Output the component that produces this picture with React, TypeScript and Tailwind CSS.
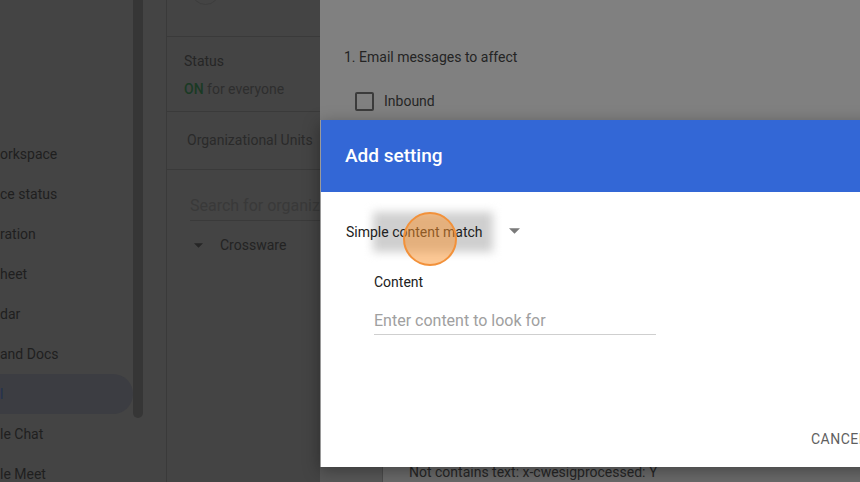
import React from 'react';

const navItems = [
  { label: 'orkspace' },
  { label: 'ce status' },
  { label: 'ration' },
  { label: 'heet' },
  { label: 'dar' },
  { label: 'and Docs' },
  { label: 'l', active: true },
  { label: 'le Chat' },
  { label: 'le Meet' },
];

const Sidebar: React.FC = () => (
  <div className="flex w-[166px] shrink-0">
    <nav className="flex w-[133px] flex-col pt-[134px]">
      {navItems.map((item) => (
        <div
          key={item.label}
          className={`flex h-10 shrink-0 items-center rounded-r-full text-[14px] ${
            item.active ? 'bg-[#3c3d42] text-[#22314f]' : 'text-[#1f1f1f]'
          }`}
        >
          {item.label}
        </div>
      ))}
    </nav>
    <div className="h-[418px] w-[10px] rounded-b-full bg-[#363636]" />
  </div>
);

const MiddlePanel: React.FC = () => (
  <div className="flex w-[154px] shrink-0 flex-col border-l border-[#3a3a3a]">
    <div className="h-[37px] shrink-0 overflow-hidden border-b border-[#3a3a3a]">
      <div className="-mt-[24px] ml-[24px] h-[29px] w-[29px] rounded-full border border-[#3d3d3d]" />
    </div>
    <div className="flex h-[75px] shrink-0 flex-col border-b border-[#3a3a3a] pl-[17px] pt-[14px] text-[14px]">
      <span className="text-[#262626]">Status</span>
      <span className="mt-[7px] whitespace-nowrap text-[#2e2e2e]">
        <span className="font-medium text-[#1a3a24]">ON</span> for everyone
      </span>
    </div>
    <div className="flex h-[58px] shrink-0 items-center whitespace-nowrap border-b border-[#3a3a3a] pl-[20px] text-[14px] text-[#2a2a2a]">
      Organizational Units
    </div>
    <div className="ml-[23px] mt-[24px] whitespace-nowrap border-b border-[#3a3a3a] pb-[2px] text-[16px] text-[#393939]">
      Search for organizations
    </div>
    <div className="mt-[14px] flex items-center whitespace-nowrap pl-[27px] text-[14px] text-[#232323]">
      <svg width="9" height="5" viewBox="0 0 10 5" className="mr-[17px]">
        <path d="M0 0 L5 5 L10 0 Z" fill="#262626" />
      </svg>
      Crossware
    </div>
  </div>
);

const AddSettingDialog: React.FC = () => (
  <div className="absolute left-0 top-[120px] flex h-[347px] w-[600px] flex-col border-l border-[#9a9a9a] bg-white shadow-[0_4px_16px_rgba(0,0,0,0.35)]">
    <div className="flex h-[72px] shrink-0 items-center bg-[#3367d6] pl-[24px] text-[19px] font-medium text-white">
      Add setting
    </div>
    <div className="relative flex flex-1 flex-col">
      <div className="absolute left-[52px] top-[20px] h-[40px] w-[120px] bg-[#cfcfcf] blur-[5px]" />
      <div className="relative mt-[30px] flex items-center pl-[25px]">
        <span className="text-[14px] text-[#212121]">Simple content match</span>
        <svg width="11" height="6" viewBox="0 0 10 5" className="ml-[26px] -mt-[3px]">
          <path d="M0 0 L5 5 L10 0 Z" fill="#7a7a7a" />
        </svg>
      </div>
      <div className="absolute left-[82px] top-[20px] h-[54px] w-[54px] rounded-full border-2 border-[#f2913a] bg-[rgba(249,146,44,0.5)]" />
      <div className="mt-[29px] pl-[53px] text-[14px] text-[#212121]">Content</div>
      <div className="ml-[53px] mt-[16px] w-[282px] border-b border-[#cfcfcf] pb-[1px] text-[16px] text-[#a0a0a0]">
        Enter content to look for
      </div>
      <div className="mt-auto mb-[17px] pl-[490px] text-[14px] tracking-[0.5px] text-[#5f5f5f]">
        CANCEL
      </div>
    </div>
  </div>
);

const RightArea: React.FC = () => (
  <div className="relative flex flex-1 flex-col">
    <div className="flex flex-1 flex-col bg-[#808080] pl-[24px]">
      <div className="mt-[47px] text-[14px] text-[#242424]">1. Email messages to affect</div>
      <div className="mt-[23px] flex items-center pl-[11px]">
        <div className="h-[19px] w-[19px] rounded-[2px] border-2 border-[#3b3b3b]" />
        <span className="ml-[10px] text-[14px] text-[#262626]">Inbound</span>
      </div>
    </div>
    <div className="flex h-[22px] shrink-0">
      <div className="w-[63px] border-r border-[#4c4c4c] bg-[#585858]" />
      <div className="flex-1 bg-[#6a6a6a] pl-[26px] pt-[2px] text-[14px] text-[#262626]">
        Not contains text: x-cwesigprocessed: Y
      </div>
    </div>
    <AddSettingDialog />
  </div>
);

const App: React.FC = () => (
  <div className="flex h-[482px] w-[860px] overflow-hidden bg-[#444444] font-['Roboto',sans-serif]">
    <Sidebar />
    <MiddlePanel />
    <RightArea />
  </div>
);

export default App;
